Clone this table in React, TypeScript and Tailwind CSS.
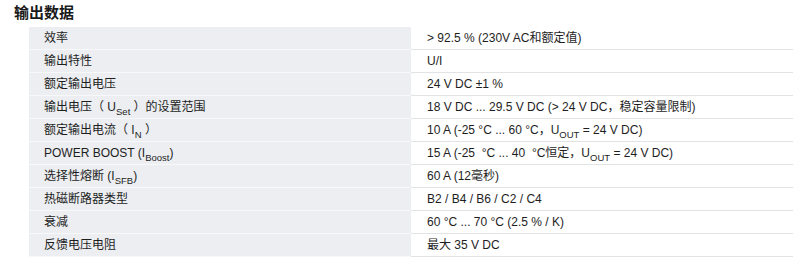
import { FC, ReactNode } from "react";

const Sub: FC<{ children: ReactNode }> = ({ children }) => (
  <sub className="text-[9.5px] relative top-[1px] align-sub leading-none">{children}</sub>
);

const rows: [ReactNode, ReactNode][] = [
  ["效率", "> 92.5 % (230V AC和额定值)"],
  ["输出特性", "U/I"],
  ["额定输出电压", "24 V DC ±1 %"],
  [
    <>输出电压（ U<Sub>Set</Sub> ）的设置范围</>,
    "18 V DC ... 29.5 V DC (> 24 V DC，稳定容量限制)",
  ],
  [
    <>额定输出电流（ I<Sub>N</Sub> ）</>,
    <>10 A (-25 °C ... 60 °C，U<Sub>OUT</Sub> = 24 V DC)</>,
  ],
  [
    <>POWER BOOST (I<Sub>Boost</Sub>)</>,
    <>15 A (-25{"\u00a0"} °C ... 40{"\u00a0"} °C恒定，U<Sub>OUT</Sub> = 24 V DC)</>,
  ],
  [<>选择性熔断 (I<Sub>SFB</Sub>)</>, "60 A (12毫秒)"],
  ["热磁断路器类型", "B2 / B4 / B6 / C2 / C4"],
  ["衰减", "60 °C ... 70 °C (2.5 % / K)"],
  ["反馈电压电阻", "最大 35 V DC"],
];

export default function App() {
  return (
    <div
      className="w-[800px] h-[273px] bg-white text-[#1e1e1e] overflow-hidden"
      style={{ fontFamily: '"Liberation Sans", "Noto Sans CJK SC", sans-serif' }}
    >
      <h2 className="pl-[14px] pt-[3px] h-[27px] text-[15px] font-bold leading-[20px] text-[#1a1a1a]">
        输出数据
      </h2>
      <div className="ml-[29px] w-[764px]">
        {rows.map(([label, value], i) => (
          <div key={i} className="grid grid-cols-2 h-[23px] text-[12px] leading-[22px]">
            <div className="bg-[#eceef1] border-b border-[#f7f8f9] pl-[15px] whitespace-pre">
              {label}
            </div>
            <div className="bg-white border-b border-[#e2e3e5] pl-[16px] whitespace-pre">
              {value}
            </div>
          </div>
        ))}
      </div>
    </div>
  );
}
